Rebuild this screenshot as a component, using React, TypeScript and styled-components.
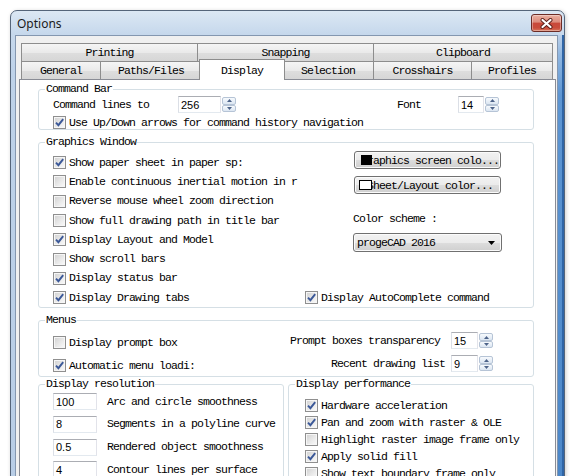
import React from "react";
import styled, { createGlobalStyle, css } from "styled-components";

const MONO = `"Liberation Mono", "Courier New", monospace`;
const SANS = `"Liberation Sans", Arial, sans-serif`;

const Global = createGlobalStyle`
  html, body { margin: 0; padding: 0; background: #ffffff; }
  body { overflow: hidden; }
  * { box-sizing: border-box; }
`;

const Page = styled.div`
  width: 577px;
  height: 476px;
  overflow: hidden;
  padding: 10px 0 0 10px;
  background: #fff;
`;

const Window = styled.div`
  width: 555px;
  height: 500px;
  border: 1px solid #55657a;
  border-radius: 7px 7px 0 0;
  background: linear-gradient(to bottom, #dce8f4 0px, #c6d8ec 23px, #bed2e9 60px, #b8cde6 100%);
  display: flex;
  flex-direction: column;
  box-shadow: 1px 1px 4px rgba(0, 0, 0, 0.2);
`;

const TitleBar = styled.div`
  height: 24px;
  flex: none;
  display: flex;
  align-items: center;
  padding: 0 2px 0 6px;
`;

const Title = styled.span`
  font-family: "Noto Sans", "Open Sans", sans-serif;
  font-size: 12px;
  color: #1b1b1b;
  margin-top: 1px;
`;

const CloseBtn = styled.div`
  margin-left: auto;
  align-self: flex-start;
  margin-top: 3px;
  width: 31px;
  height: 18px;
  border: 1px solid #6c2c26;
  border-radius: 3px;
  background: linear-gradient(to bottom, #eab0a2 0%, #dc8b7b 45%, #c9493a 50%, #c94c3b 80%, #d8775d 100%);
  display: flex;
  align-items: center;
  justify-content: center;
  box-shadow: inset 0 0 0 1px rgba(255, 255, 255, 0.35);
`;

const Body = styled.div`
  flex: 1;
  display: flex;
  min-height: 0;
`;

const SideFrame = styled.div<{ $w: number; $right?: boolean }>`
  width: ${(p) => p.$w}px;
  flex: none;
  ${(p) =>
    p.$right &&
    css`
      background: linear-gradient(to bottom, #bcd0e8 0px, #8fb6e0 20px, #5d95d2 60px, #4a86c8 100%);
      box-shadow: inset -2px 0 0 #2f65a6;
    `}
`;

const Client = styled.div`
  flex: 1;
  min-width: 0;
  background: #f0f0f0;
  border: 1px solid #8497b0;
  border-bottom: none;
  padding: 7px 1px 0 3px;
  display: flex;
  flex-direction: column;
`;

const TabRow = styled.div`
  display: flex;
  align-items: flex-start;
  margin-left: 2px;
  height: 18px;
  flex: none;
`;

const Tab = styled.div<{ $w: number; $first?: boolean; $active?: boolean }>`
  width: ${(p) => p.$w}px;
  height: 18px;
  flex: none;
  margin-left: ${(p) => (p.$first ? 0 : -1)}px;
  border: 1px solid #8d8d8d;
  border-bottom: none;
  background: linear-gradient(to bottom, #f5f5f5 0%, #eaeaea 50%, #dedede 51%, #d6d6d6 100%);
  display: flex;
  align-items: center;
  justify-content: center;
  font-family: ${MONO};
  font-size: 11.5px;
  letter-spacing: -0.9px;
  color: #000;
  white-space: nowrap;
  ${(p) =>
    p.$active &&
    css`
      height: 21px;
      margin-top: -2px;
      margin-left: -3px;
      margin-right: -2px;
      background: #fff;
      position: relative;
      z-index: 2;
    `}
`;

const Panel = styled.div`
  flex: 1;
  background: #fff;
  border: 1px solid #898c95;
  border-bottom: none;
  padding: 3px 21px 0 18px;
  display: flex;
  flex-direction: column;
`;

const Group = styled.fieldset<{ $mt?: number }>`
  margin: ${(p) => p.$mt ?? 0}px 0 0;
  padding: 0;
  min-width: 0;
  border: 1px solid #d5dfe5;
  border-radius: 3px;
`;

const Legend = styled.legend`
  margin-left: 6px;
  padding: 0 1px;
  font-family: ${MONO};
  font-size: 11.5px;
  letter-spacing: -0.9px;
  line-height: 12px;
  color: #000;
`;

const GroupBody = styled.div<{ $pad: string; $gap?: number }>`
  padding: ${(p) => p.$pad};
  display: flex;
  flex-direction: column;
  gap: ${(p) => p.$gap ?? 0}px;
`;

const Row = styled.div<{ $h: number; $mt?: number }>`
  display: flex;
  align-items: center;
  height: ${(p) => p.$h}px;
  margin-top: ${(p) => p.$mt ?? 0}px;
`;

const Text = styled.span<{ $w?: number; $ml?: number }>`
  font-family: ${MONO};
  font-size: 11.5px;
  letter-spacing: -0.9px;
  line-height: 12px;
  color: #000;
  white-space: nowrap;
  flex: none;
  ${(p) => p.$w !== undefined && `width: ${p.$w}px;`}
  margin-left: ${(p) => p.$ml ?? 0}px;
`;

const Edit = styled.div<{ $w: number }>`
  width: ${(p) => p.$w}px;
  height: 17px;
  flex: none;
  border: 1px solid;
  border-color: #abadb3 #e2e3ea #e3e9ef #dbdfe6;
  background: #fff;
  font-family: ${SANS};
  font-size: 11px;
  color: #000;
  padding-left: 2px;
  display: flex;
  align-items: center;
`;

const Spinner = styled.div`
  width: 16px;
  height: 17px;
  flex: none;
  display: flex;
  flex-direction: column;
  padding: 1px 1px 1px 1px;
`;

const SpinHalf = styled.div`
  flex: 1;
  border: 1px solid #b6c4d6;
  border-radius: 2px;
  background: linear-gradient(to bottom, #f7fafd, #dce6f2);
  display: flex;
  align-items: center;
  justify-content: center;
`;

const SpinWrap = styled.div`
  display: flex;
  flex: none;
`;

function Spin({ value, w }: { value: string; w: number }) {
  return (
    <SpinWrap>
      <Edit $w={w}>{value}</Edit>
      <Spinner>
        <SpinHalf>
          <svg width="5" height="3" viewBox="0 0 5 3">
            <path d="M0 3 L2.5 0 L5 3 Z" fill="#4d6389" />
          </svg>
        </SpinHalf>
        <SpinHalf>
          <svg width="5" height="3" viewBox="0 0 5 3">
            <path d="M0 0 L2.5 3 L5 0 Z" fill="#4d6389" />
          </svg>
        </SpinHalf>
      </Spinner>
    </SpinWrap>
  );
}

const CheckLabel = styled.label<{ $h?: number; $end?: boolean }>`
  display: flex;
  align-items: center;
  gap: 3px;
  height: ${(p) => (p.$h ? `${p.$h}px` : "100%")};
  ${(p) => p.$end && "align-self: flex-end; height: 13px;"}
`;

const CheckBox = styled.span`
  width: 13px;
  height: 13px;
  flex: none;
  border: 1px solid #8f8f8f;
  background: linear-gradient(135deg, #d0d0d0 0%, #e9e9e9 55%, #fbfbfb 100%);
  box-shadow: inset 0 0 0 1px #f6f6f6;
  display: flex;
  align-items: center;
  justify-content: center;
`;

function Check({ on, label, h, end }: { on?: boolean; label: string; h?: number; end?: boolean }) {
  return (
    <CheckLabel $h={h} $end={end}>
      <CheckBox>
        {on && (
          <svg width="11" height="11" viewBox="0 0 11 11">
            <path d="M2 5.6 L4.4 8.2 L9.2 2.2" fill="none" stroke="#3b5898" strokeWidth="1.9" />
          </svg>
        )}
      </CheckBox>
      <Text>{label}</Text>
    </CheckLabel>
  );
}

const GfxGrid = styled.div`
  display: grid;
  grid-template-columns: 252px 1fr;
  grid-auto-rows: 19.3px;
  padding: 5px 0 0 14px;
`;

const GfxSide = styled.div`
  grid-column: 2;
  grid-row: 1 / span 7;
  padding-left: 48px;
  margin-top: -2px;
  display: flex;
  flex-direction: column;
  align-items: flex-start;
`;

const GfxAuto = styled.div`
  grid-column: 2;
  grid-row: 8;
`;

const ColorButton = styled.div<{ $mt?: number }>`
  position: relative;
  width: 147px;
  height: 18px;
  margin-left: 1px;
  margin-top: ${(p) => p.$mt ?? 0}px;
  border: 1px solid #707070;
  border-radius: 3px;
  background: linear-gradient(to bottom, #f2f2f2 0%, #ebebeb 50%, #dddddd 51%, #cfcfcf 100%);
  box-shadow: inset 0 0 0 1px #fbfbfb;
  padding-left: 5px;
  display: flex;
  align-items: center;
  justify-content: center;
  font-family: ${MONO};
  font-size: 11.5px;
  letter-spacing: -0.9px;
  color: #000;
  white-space: nowrap;
`;

const Swatch = styled.span<{ $bg: string; $l: number; $w: number; $outline?: boolean }>`
  position: absolute;
  top: 3px;
  left: ${(p) => p.$l}px;
  width: ${(p) => p.$w}px;
  height: 10px;
  background: ${(p) => p.$bg};
  ${(p) => p.$outline && "border: 1px solid #000;"}
`;

const SideLabel = styled(Text)<{ $mt: number }>`
  margin-top: ${(p) => p.$mt}px;
`;

const Combo = styled.div`
  width: 149px;
  height: 19px;
  margin-top: 8px;
  border: 1px solid #707070;
  border-radius: 3px;
  background: linear-gradient(to bottom, #f2f2f2 0%, #ebebeb 50%, #dddddd 51%, #cfcfcf 100%);
  box-shadow: inset 0 0 0 1px #fbfbfb;
  display: flex;
  align-items: center;
  padding: 0 6px 0 3px;
  font-family: ${MONO};
  font-size: 11.5px;
  letter-spacing: -0.9px;
  color: #000;
  & > svg {
    margin-left: auto;
  }
`;

const MenuRow = styled.div`
  display: flex;
  align-items: center;
  height: 17px;
`;

const RightPair = styled.div<{ $gap: number }>`
  margin-left: auto;
  display: flex;
  align-items: center;
  gap: ${(p) => p.$gap}px;
`;

const BottomGrid = styled.div`
  display: grid;
  grid-template-columns: 246px 246px;
  column-gap: 4px;
  margin-top: 1px;
  align-items: start;
`;

const ResRow = styled.div`
  display: flex;
  align-items: center;
  gap: 10px;
  height: 17px;
`;

export default function App() {
  return (
    <>
      <Global />
      <Page>
        <Window>
          <TitleBar>
            <Title>Options</Title>
            <CloseBtn>
              <svg width="13" height="11" viewBox="0 0 13 11">
                <path d="M2.5 2 L10.5 9 M10.5 2 L2.5 9" stroke="#5a1e19" strokeWidth="4" strokeLinecap="round" />
                <path d="M2.5 2 L10.5 9 M10.5 2 L2.5 9" stroke="#ffffff" strokeWidth="2.2" strokeLinecap="round" />
              </svg>
            </CloseBtn>
          </TitleBar>
          <Body>
            <SideFrame $w={4} />
            <Client>
              <TabRow>
                <Tab $w={177} $first>Printing</Tab>
                <Tab $w={177}>Snapping</Tab>
                <Tab $w={180}>Clipboard</Tab>
              </TabRow>
              <TabRow>
                <Tab $w={80} $first>General</Tab>
                <Tab $w={102}>Paths/Files</Tab>
                <Tab $w={86} $active>Display</Tab>
                <Tab $w={92}>Selection</Tab>
                <Tab $w={99}>Crosshairs</Tab>
                <Tab $w={82}>Profiles</Tab>
              </TabRow>
              <Panel>
                <Group>
                  <Legend>Command Bar</Legend>
                  <GroupBody $pad="1px 0 0 14px">
                    <Row $h={17}>
                      <Text $w={125}>Command lines to</Text>
                      <Spin value="256" w={43} />
                      <Text $w={61} $ml={160}>Font</Text>
                      <Spin value="14" w={26} />
                    </Row>
                    <Row $h={13} $mt={3}>
                      <Check on label="Use Up/Down arrows for command history navigation" />
                    </Row>
                  </GroupBody>
                </Group>

                <Group $mt={6}>
                  <Legend>Graphics Window</Legend>
                  <GfxGrid>
                    <Check on label="Show paper sheet in paper sp:" />
                    <GfxSide>
                      <ColorButton>
                        Graphics screen colo...
                        <Swatch $bg="#000" $l={6} $w={11} />
                      </ColorButton>
                      <ColorButton $mt={7}>
                        Sheet/Layout color...
                        <Swatch $bg="#fff" $l={4} $w={13} $outline />
                      </ColorButton>
                      <SideLabel $mt={19}>Color scheme :</SideLabel>
                      <Combo>
                        progeCAD 2016
                        <svg width="7" height="4" viewBox="0 0 7 4">
                          <path d="M0 0 L7 0 L3.5 4 Z" fill="#000" />
                        </svg>
                      </Combo>
                    </GfxSide>
                    <Check label="Enable continuous inertial motion in r" />
                    <Check label="Reverse mouse wheel zoom direction" />
                    <Check label="Show full drawing path in title bar" />
                    <Check on label="Display Layout and Model" />
                    <Check label="Show scroll bars" />
                    <Check on label="Display status bar" />
                    <Check on label="Display Drawing tabs" />
                    <GfxAuto>
                      <Check on label="Display AutoComplete command" />
                    </GfxAuto>
                  </GfxGrid>
                </Group>

                <Group $mt={6}>
                  <Legend>Menus</Legend>
                  <GroupBody $pad="6px 39px 4px 14px" $gap={6}>
                    <MenuRow>
                      <Check end label="Display prompt box" />
                      <RightPair $gap={11}>
                        <Text>Prompt boxes transparency</Text>
                        <Spin value="15" w={27} />
                      </RightPair>
                    </MenuRow>
                    <MenuRow>
                      <Check end on label="Automatic menu loadi:" />
                      <RightPair $gap={6}>
                        <Text>Recent drawing list</Text>
                        <Spin value="9" w={27} />
                      </RightPair>
                    </MenuRow>
                  </GroupBody>
                </Group>

                <BottomGrid>
                  <Group>
                    <Legend>Display resolution</Legend>
                    <GroupBody $pad="3px 0 8px 14px" $gap={5.6}>
                      <ResRow>
                        <Edit $w={44}>100</Edit>
                        <Text>Arc and circle smoothness</Text>
                      </ResRow>
                      <ResRow>
                        <Edit $w={44}>8</Edit>
                        <Text>Segments in a polyline curve</Text>
                      </ResRow>
                      <ResRow>
                        <Edit $w={44}>0.5</Edit>
                        <Text>Rendered object smoothness</Text>
                      </ResRow>
                      <ResRow>
                        <Edit $w={44}>4</Edit>
                        <Text>Contour lines per surface</Text>
                      </ResRow>
                    </GroupBody>
                  </Group>
                  <Group>
                    <Legend>Display performance</Legend>
                    <GroupBody $pad="7px 0 8px 16px">
                      <Check h={17} on label="Hardware acceleration" />
                      <Check h={17} on label="Pan and zoom with raster & OLE" />
                      <Check h={17} label="Highlight raster image frame only" />
                      <Check h={17} on label="Apply solid fill" />
                      <Check h={17} label="Show text boundary frame only" />
                    </GroupBody>
                  </Group>
                </BottomGrid>
              </Panel>
            </Client>
            <SideFrame $w={6} $right />
          </Body>
        </Window>
      </Page>
    </>
  );
}
